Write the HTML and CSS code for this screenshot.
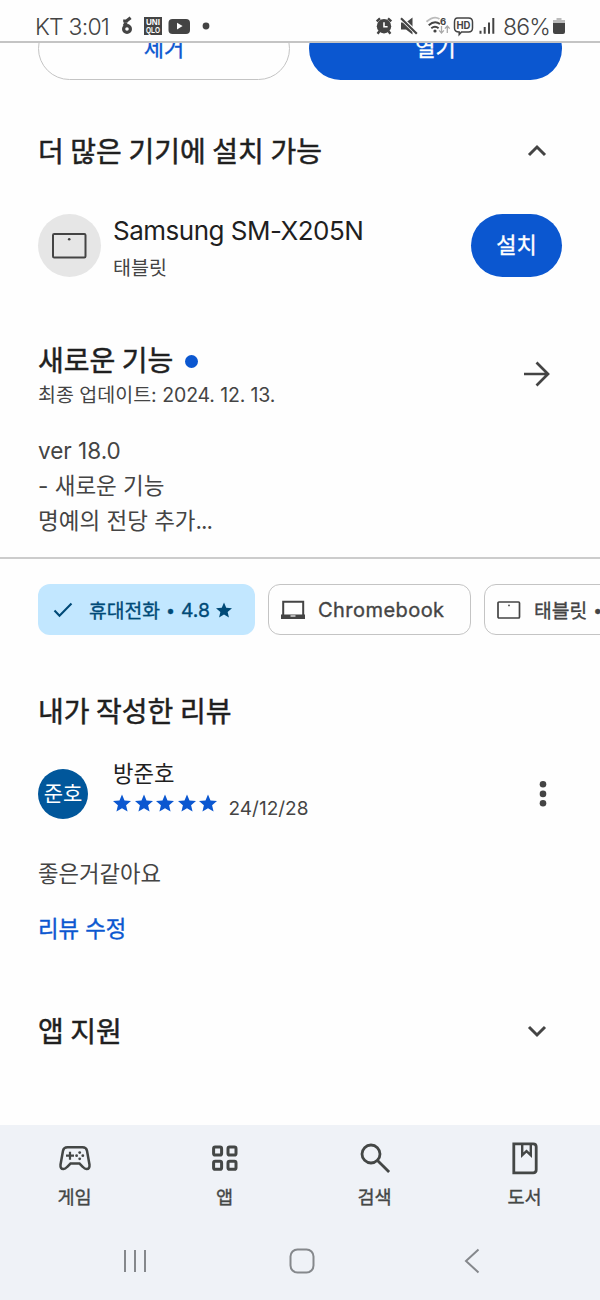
FILE: index.html
```html
<!DOCTYPE html>
<html lang="ko">
<head>
<meta charset="utf-8">
<title>앱 정보</title>
<link rel="stylesheet" href="styles.css">
</head>
<body>
<svg class="defs" width="0" height="0">
  <symbol id="star" viewBox="2 2 20 19"><path d="M12 17.27 18.18 21l-1.64-7.03L22 9.24l-7.19-.61L12 2 9.19 8.63 2 9.24l5.46 4.73L5.82 21z"/></symbol>
</svg>
<header class="status">
  <span class="clock">KT 3:01</span>
  <svg class="status-left" width="96" height="24" viewBox="0 0 96 24">
    <g fill="none" stroke="#444" stroke-width="3.2"><circle cx="7" cy="15" r="3.4"/><path d="M4.2 12 6.3 8M3.2 7l3.6-.2 3.800-3"/></g>
    <rect x="24" y="3" width="18" height="18" fill="#444"/>
    <g class="brand"><text x="26" y="11.2" textLength="14" lengthAdjust="spacingAndGlyphs">UNI</text><text x="26" y="19.3" textLength="14" lengthAdjust="spacingAndGlyphs">QLO</text></g>
    <rect x="48.5" y="5" width="21.5" height="15" rx="4" fill="#444"/><path d="M57 8.8v6.6l5.6-3.3z" fill="#fff"/>
    <circle cx="86" cy="12" r="3.4" fill="#444"/>
  </svg>
  <svg class="status-right" width="126" height="24" viewBox="0 0 126 24">
    <circle cx="9" cy="12.2" r="7.2" fill="#444"/><path d="M9 8.3v4.400h3.600" stroke="#fff" stroke-width="1.6" fill="none"/><path d="M1.700 7.300 5 4.300M16.300 7.300 13 4.300M4.400 17.200 2.600 19.700M13.600 17.200l1.800 2.500" stroke="#444" stroke-width="2.400"/>
    <path d="M26 8.500h5l6.500-5v17l-6.500-5h-5z" fill="#444"/><path d="M25.600 3.600 42.400 20" stroke="#fff" stroke-width="4"/><path d="M26 4.200 41.800 19.800" stroke="#444" stroke-width="2.200"/>
    <g fill="none" stroke="#444" stroke-width="1.900"><path d="M51.500 7.800Q59 1.200 64.500 5" stroke="#bbb"/><path d="M53.700 11.300Q59.500 6 65 10M56.300 14.200Q60 11.200 63.600 14.200"/></g>
    <circle cx="60" cy="17" r="1.600" fill="#444"/><text class="wifi-six" x="65" y="11.200">6</text>
    <path d="M66.500 12v7m-2.400-2.600 2.400 2.600 2.400-2.600M72.300 19v-7m-2.400 2.600 2.400-2.600 2.400 2.600" fill="none" stroke="#aaa" stroke-width="1.300"/>
    <path d="M82.500 4h11q4 0 4 4v6q0 4-4 4h-7l-2.300 2.600V18q-4.700 0-4.700-4V8q0-4 3-4z" fill="none" stroke="#444" stroke-width="1.500"/>
    <text class="hd" x="81.500" y="15" textLength="14" lengthAdjust="spacingAndGlyphs">HD</text>
    <path d="M105.500 16.800v3M109.700 13v6.800M114 8.600v11.200M118.300 4v15.800" stroke="#444" stroke-width="2"/>
  </svg>
  <span class="percent">86%</span>
  <svg class="battery" width="12" height="18" viewBox="0 0 12 18"><path d="M3.500 1h5v2H12v4H0V3h3.500z" fill="#bbb"/><path d="M0 6h12v9q0 2-2 2H2q-2 0-2-2z" fill="#444"/></svg>
</header>
<main>
  <div class="actions">
    <button class="btn outline">제거</button>
    <button class="btn solid">열기</button>
  </div>
  <section class="head devices-head">
    <h2>더 많은 기기에 설치 가능</h2>
    <svg class="chev" width="20" height="14" viewBox="0 0 20 14"><path d="m2 11 8-8 8 8"/></svg>
  </section>
  <div class="device">
    <span class="device-icon"><svg width="35" height="26" viewBox="0 0 35 26"><rect x="1" y="1" width="32.500" height="23.500" rx="1.200" fill="none" stroke="#444" stroke-width="2"/><circle cx="17.200" cy="6.300" r="1.300" fill="#444"/></svg></span>
    <div class="device-text"><div class="device-name">Samsung SM-X205N</div><div class="small">태블릿</div></div>
    <button class="btn solid install">설치</button>
  </div>
  <section class="news">
    <div class="news-main">
      <h2>새로운 기능<i class="dot"></i></h2>
      <div class="small updated">최종 업데이트: <span>2024. 12. 13.</span></div>
    </div>
    <svg class="arrow" width="28" height="26" viewBox="0 0 28 26"><path d="M1 13h24M13.500 1.500 25 13 13.500 24.500"/></svg>
  </section>
  <p class="notes"><span class="version">ver 18.0</span><br>- 새로운 기능<br>명예의 전당 추가<span class="dots">...</span></p>
  <div class="chips">
    <div class="chip selected"><svg class="chip-check" width="20" height="16" viewBox="0 0 20 16"><path d="m1.500 8.500 5 5.300L18.500 1.500" fill="none" stroke="#004a77" stroke-width="2.100"/></svg><span>휴대전화</span><b>•</b><span class="rating">4.8</span><svg class="chip-star" width="16" height="16"><use href="#star"/></svg></div>
    <div class="chip chrome"><svg width="26" height="20" viewBox="0 0 26 20"><path d="M3.200 15V1.800h20V15" fill="none" stroke="#444" stroke-width="2"/><path d="M1 14.500h24V19H1z" fill="#444"/><path d="M10.500 16h5" stroke="#fff" stroke-width="1.200"/></svg><span>Chromebook</span></div>
    <div class="chip tablet"><svg width="24" height="18" viewBox="0 0 24 18"><rect x="1" y="1" width="21.500" height="16" rx="1" fill="none" stroke="#444" stroke-width="1.700"/><circle cx="12" cy="4.400" r=".9" fill="#444"/></svg><span>태블릿</span><b>•</b></div>
  </div>
  <section class="head review-head"><h2>내가 작성한 리뷰</h2></section>
  <div class="review">
    <span class="avatar">준호</span>
    <div class="reviewer">
      <div class="name">방준호</div>
      <div class="stars"><svg><use href="#star"/></svg><svg><use href="#star"/></svg><svg><use href="#star"/></svg><svg><use href="#star"/></svg><svg><use href="#star"/></svg><time>24/12/28</time></div>
    </div>
    <svg class="more" width="8" height="28" viewBox="0 0 8 28" fill="#444"><circle cx="4" cy="4.300" r="3.300"/><circle cx="4" cy="13.900" r="3.300"/><circle cx="4" cy="23.300" r="3.300"/></svg>
  </div>
  <p class="comment">좋은거같아요</p>
  <a class="edit">리뷰 수정</a>
  <section class="head support"><h2>앱 지원</h2>
    <svg class="chev" width="20" height="14" viewBox="0 0 20 14"><path d="m2 3 8 8 8-8"/></svg>
  </section>
</main>
<footer>
  <nav class="tabs">
    <div class="tab"><svg width="34" height="34" viewBox="0 0 34 34"><path d="M9.500 6.200h15q3.800 0 4.500 3.500l2.500 14q.4 4.500-3 4.300-1.800-.1-3.500-2L21.500 22.500h-9L9 26q-1.700 1.900-3.500 2-3.400.2-3-4.300l2.500-14Q5.700 6.200 9.500 6.200z" fill="none" stroke="#444746" stroke-width="2.500"/><path d="M8 14.700h8M12 10.700v8" stroke="#444746" stroke-width="2.200"/><g fill="#444746"><circle cx="21.700" cy="11.600" r="1.400"/><circle cx="21.700" cy="17.800" r="1.400"/><circle cx="18.600" cy="14.700" r="1.400"/><circle cx="24.800" cy="14.700" r="1.400"/></g></svg><span>게임</span></div>
    <div class="tab"><svg width="34" height="34" viewBox="0 0 34 34"><g fill="none" stroke="#444746" stroke-width="3"><rect x="5.600" y="6.100" width="8" height="8" rx="1.600"/><rect x="20" y="6.100" width="8" height="8" rx="1.600"/><rect x="5.600" y="20.300" width="8" height="8" rx="1.600"/><rect x="20" y="20.300" width="8" height="8" rx="1.600"/></g></svg><span>앱</span></div>
    <div class="tab"><svg width="34" height="34" viewBox="0 0 34 34"><g fill="none" stroke="#444746" stroke-width="2.800"><circle cx="13" cy="13" r="9"/><path d="m19.500 19.500 11.600 11.600"/></g></svg><span>검색</span></div>
    <div class="tab"><svg width="34" height="34" viewBox="0 0 34 34"><path d="M5.800 2.800h19.400q3 0 3 3v23q0 3-3 3H5.800z" fill="none" stroke="#444746" stroke-width="2.800"/><path d="M14.200 3v11.200l4.300-4 4.300 4V3" fill="none" stroke="#444746" stroke-width="2.400"/></svg><span>도서</span></div>
  </nav>
  <div class="system">
    <svg width="24" height="26" viewBox="0 0 24 26"><path d="M2 2v22M12 2v22M22 2v22"/></svg>
    <svg class="home" width="26" height="26" viewBox="0 0 26 26"><rect x="1.500" y="1.500" width="23" height="23" rx="7"/></svg>
    <svg width="16" height="26" viewBox="0 0 16 26"><path d="M14.500 1.500 2 13l12.500 11.500"/></svg>
  </div>
</footer>
</body>
</html>
```
FILE: styles.css
```css
* { box-sizing: border-box; margin: 0; padding: 0; }
body { width: 600px; height: 1300px; overflow: hidden; background: #fefefe; color: #1f1f1f; font-family: Inter, "Noto Sans CJK KR", sans-serif; display: flex; flex-direction: column; }
svg { display: block; flex: none; }
.defs { position: absolute; }
.btn, .chip, .edit, .tab { -webkit-text-stroke: .35px currentColor; }
h2 { font: 400 28px/40px Inter, "Noto Sans CJK KR", sans-serif; white-space: nowrap; word-spacing: -1.300px; padding-top: 1px; -webkit-text-stroke: .5px currentColor; }
.status { height: 43px; padding: 11px 34px 0 35px; border-bottom: 2px solid #c4c4c4; display: flex; align-items: flex-start; color: #444; flex: none; }
.clock, .percent { font: 300 23px/32px Inter, sans-serif; letter-spacing: -.8px; white-space: nowrap; }
.clock { width: 85px; }
.status-left { margin-top: 3px; }
.status-right { margin: 3px 0 0 159px; }
.percent { width: 52px; padding-left: 2px; }
.battery { margin-top: 6px; }
.brand { fill: #fff; font: 700 8.500px "Liberation Sans", sans-serif; }
.wifi-six { fill: #444; font: 700 9.500px Inter, sans-serif; }
.hd { fill: #444; font: 700 10.500px Inter, sans-serif; }
main { height: 1082px; flex: none; }
.actions { height: 37px; overflow: hidden; display: flex; align-items: flex-end; gap: 19px; padding-left: 38px; }
.btn { height: 63px; flex: none; border: 0; border-radius: 32px; font: 400 22px/63px Inter, "Noto Sans CJK KR", sans-serif; text-align: center; }
.outline { width: 252px; border: 1.500px solid #c4c4c4; background: none; color: #0b57d0; line-height: 61px; }
.solid { width: 253px; background: #0b57d0; color: #fff; }
.head { display: flex; justify-content: space-between; align-items: center; padding: 0 53px 0 38px; height: 40px; }
.chev { fill: none; stroke: #444; stroke-width: 3; }
.devices-head { margin-top: 51px; }
.device { display: flex; margin-top: 43px; height: 63px; padding: 0 38px; }
.device-icon { width: 63px; height: 63px; border-radius: 50%; background: #e6e6e6; display: flex; align-items: center; justify-content: center; }
.device-text { flex: 1; padding: 1px 0 0 12px; }
.device-name { font-size: 26px; line-height: 32px; white-space: nowrap; letter-spacing: -.5px; }
.small { font-size: 19.500px; line-height: 28px; color: #444; }
.device-text .small { margin-top: 7px; }
.install { width: 91px; }
.news { display: flex; justify-content: space-between; align-items: flex-start; margin-top: 63px; padding: 0 49px 0 38px; height: 70px; }
.news h2 { display: flex; align-items: center; }
.updated span { letter-spacing: -.15px; }
.dot { width: 13px; height: 13px; border-radius: 50%; background: #0b57d0; margin-left: 12px; }
.arrow { margin-top: 21px; fill: none; stroke: #444; stroke-width: 2.700; }
.notes { padding-left: 38px; margin-top: 23px; height: 126px; border-bottom: 2px solid #ccc; font-size: 22.500px; line-height: 35px; color: #444; }
.dots { letter-spacing: -1px; }
.chips { margin-top: 25px; height: 51px; display: flex; gap: 13px; padding-left: 38px; overflow: hidden; }
.chip { flex: none; height: 51px; border: 1.500px solid #c4c4c4; border-radius: 12px; display: flex; align-items: center; font-size: 19.300px; color: #444; white-space: nowrap; }
.chip b { font: 400 16px/24px Inter, sans-serif; margin: 0 6px; }
.selected { width: 217px; border: 0; background: #c2e7ff; color: #004a77; padding-left: 15px; }
.chip-check { margin-right: 16px; }
.chip-star { fill: #004a77; margin-left: 6px; }
.chrome { width: 203px; padding-left: 11px; }
.chrome svg { margin-right: 12px; }
.chrome span { font-size: 20px; letter-spacing: .45px; }
.tablet { width: 217px; padding-left: 12px; }
.tablet svg { margin-right: 13px; }
.review-head { margin-top: 56px; }
.review { display: flex; padding: 0 53px 0 38px; height: 60px; margin-top: 28px; }
.avatar { width: 50px; height: 50px; margin-top: 10px; border-radius: 50%; background: #01579b; color: #fff; font-size: 21px; line-height: 49px; text-align: center; }
.reviewer { flex: 1; padding-left: 25px; }
.name { font-size: 22.300px; line-height: 30px; }
.stars { display: flex; gap: 3.500px; height: 30px; }
.stars svg { width: 18px; height: 18px; margin-top: 5px; fill: #0b57d0; }
time { margin-left: 8px; font-size: 19px; line-height: 39px; color: #444; }
.more { margin-top: 21px; }
.comment { margin: 40px 0 0 38px; font-size: 22.300px; line-height: 30px; color: #444; }
.edit { display: block; margin: 25px 0 0 38px; font-size: 22.300px; line-height: 30px; color: #0b57d0; }
.support { margin-top: 67px; }
footer { height: 175px; background: #eff2f7; flex: none; }
.tabs { height: 98px; display: flex; }
.tab { width: 150px; padding-top: 16px; display: flex; flex-direction: column; align-items: center; font-size: 18.600px; line-height: 28px; color: #444746; }
.tab span { margin: 8px 1px 0 0; }
.system { display: flex; padding: 25px 120px 0 123px; justify-content: space-between; }
.system svg { fill: none; stroke: #85888c; stroke-width: 2; }
.system .home { margin: 0 7px 0 0; }
```
